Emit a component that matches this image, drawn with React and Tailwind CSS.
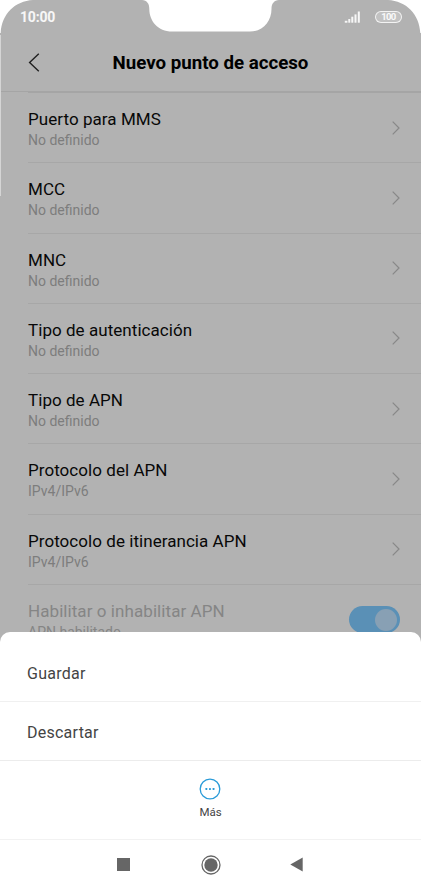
import React from "react";

const rows = [
  ["Puerto para MMS", "No definido"],
  ["MCC", "No definido"],
  ["MNC", "No definido"],
  ["Tipo de autenticación", "No definido"],
  ["Tipo de APN", "No definido"],
  ["Protocolo del APN", "IPv4/IPv6"],
  ["Protocolo de itinerancia APN", "IPv4/IPv6"],
];

function StatusBar() {
  return (
    <div className="relative flex h-[35px] items-start justify-between pl-[20px] pr-[19px] text-white/90">
      <span className="mt-[8px] text-[14px] leading-[18px] font-bold tracking-[-0.2px]">10:00</span>
      <div className="mt-[11px] flex items-center">
        <svg className="mr-[14px] h-[12px] w-[17px]" viewBox="0 0 17 12" fill="currentColor">
          <rect x="0.8" y="9.8" width="2.6" height="1.9" />
          <rect x="4.3" y="8" width="2" height="3.7" />
          <rect x="7.3" y="5.7" width="2" height="6" />
          <rect x="10.5" y="3.4" width="2" height="8.3" />
          <rect x="13.8" y="0.5" width="2" height="11.2" />
        </svg>
        <span className="flex h-[12px] w-[27px] items-center justify-center rounded-full border border-white/80 bg-[#c2c2c2] text-[9.5px] leading-none font-bold tracking-[-0.7px]">
          100
        </span>
      </div>
      <svg className="absolute inset-x-0 top-0 h-[35px] w-[421px]" viewBox="0 0 421 35" fill="#fff">
        <path d="M0 0H33C15 1 1.5 14 0.7 33H0Z" />
        <path d="M421 0H388C406 1 419.5 14 420.3 33H421Z" />
        <path d="M142 0H279C274 0.5 271.5 3.5 271.5 9C271.5 21 263 31.6 250 31.6H172C158 31.6 149.3 21 149.3 9C149.3 3.5 147 0.5 142 0Z" />
      </svg>
    </div>
  );
}

function Row({ title, value }) {
  return (
    <div className="flex h-[70.25px] items-center justify-between border-b border-[#a7a7a7] pr-[21px]">
      <div className="pt-[3px]">
        <div className="text-[17px] leading-[22px] tracking-[0.05px] text-[#080808]">{title}</div>
        <div className="text-[14px] leading-[20px] text-[#7d7d7d]">{value}</div>
      </div>
      <svg className="h-[14px] w-[8px]" viewBox="0 0 8 14" fill="none" stroke="#888" strokeWidth="1.2">
        <path d="M0.7 0.7L7 7L0.7 13.3" />
      </svg>
    </div>
  );
}

export default function App() {
  return (
    <div className="relative flex h-[890px] w-[421px] flex-col overflow-hidden bg-[#b2b2b2] font-['Roboto','Liberation_Sans',sans-serif]">
      <StatusBar />
      <header className="relative flex h-[57px] items-center justify-center border-b border-[#a5a5a5]">
        <svg className="absolute top-[18px] left-[28px] h-[19px] w-[12px]" viewBox="0 0 12 19" fill="none" stroke="#202020" strokeWidth="1.4">
          <path d="M10.8 0.8L1.6 9.5L10.8 18.2" />
        </svg>
        <h1 className="text-[18.7px] leading-[22px] font-bold text-black">Nuevo punto de acceso</h1>
      </header>
      <main className="ml-[28px] flex-1 border-t border-[#a5a5a5]">
        {rows.map(([title, value]) => (
          <Row key={title} title={title} value={value} />
        ))}
        <div className="flex h-[70px] items-center justify-between pr-[21px]">
          <div className="pt-[3px]">
            <div className="text-[17px] leading-[22px] tracking-[0.07px] text-[#858585]">Habilitar o inhabilitar APN</div>
            <div className="text-[14px] leading-[20px] text-[#858585]">APN habilitado</div>
          </div>
          <div className="flex h-[27px] w-[51px] items-center justify-end rounded-full bg-[#5a90b6] pr-[3px]">
            <div className="size-[22px] rounded-full bg-[#88a0b4]" />
          </div>
        </div>
      </main>
      <div className="absolute top-[35px] left-0 h-[161px] w-px bg-[#d5d5d5]" />
      <section className="absolute inset-x-0 bottom-0 flex h-[258px] flex-col rounded-t-[10px] bg-white text-[#444]">
        <div className="flex h-[70px] items-center border-b border-[#f0f0f0] pt-[14px] pl-[27px] text-[16px] tracking-[0.25px]">Guardar</div>
        <div className="flex h-[59px] items-center border-b border-[#ececec] pt-[4px] pl-[27px] text-[16px] tracking-[0.25px]">Descartar</div>
        <div className="flex h-[79px] flex-col items-center border-b border-[#f2f2f2] pt-[17px]">
          <svg className="mr-px h-[22px] w-[22px]" viewBox="0 0 22 22" fill="none">
            <circle cx="11" cy="11" r="9.8" stroke="#2a9bd8" strokeWidth="1.3" />
            <g fill="#2a9bd8">
              <rect x="6.4" y="10.1" width="1.9" height="1.9" rx="0.4" />
              <rect x="10" y="10.1" width="1.9" height="1.9" rx="0.4" />
              <rect x="13.6" y="10.1" width="1.9" height="1.9" rx="0.4" />
            </g>
          </svg>
          <span className="mt-[4px] text-[11.5px] leading-[16px]">Más</span>
        </div>
        <nav className="flex flex-1 items-center justify-between pr-[118px] pb-px pl-[117px]">
          <div className="size-[13px] bg-[#666]" />
          <svg className="ml-px h-[20px] w-[20px]" viewBox="0 0 20 20">
            <circle cx="10" cy="10" r="9" fill="none" stroke="#666" strokeWidth="1.3" />
            <circle cx="10" cy="10" r="6.7" fill="#666" />
          </svg>
          <svg className="h-[15px] w-[13px]" viewBox="0 0 13 15" fill="#666">
            <path d="M0.3 7.5L12.7 0.5V14.5Z" />
          </svg>
        </nav>
      </section>
    </div>
  );
}
